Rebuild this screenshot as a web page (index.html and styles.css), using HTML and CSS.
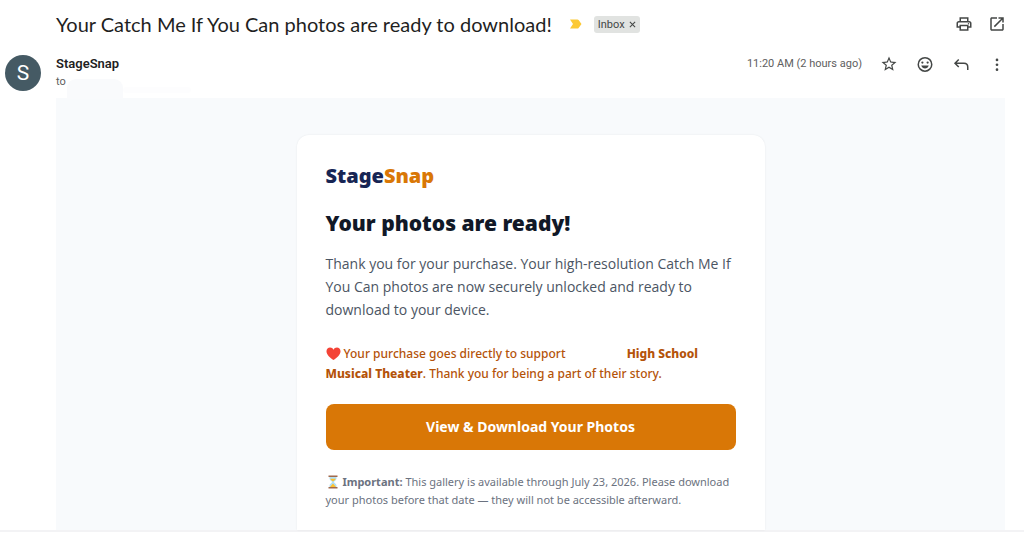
FILE: index.html
```
<!DOCTYPE html>
<html lang="en">
<head>
    <meta charset="UTF-8">
    <meta name="viewport" content="width=device-width, initial-scale=1.0">
    <title>Your Catch Me If You Can photos are ready to download!</title>
    <link rel="stylesheet" href="styles.css">
</head>
<body>
    <div class="mail">
        <header class="subject-row">
            <h1 class="subject">Your Catch Me If You Can photos are ready to download!</h1>
            <svg class="important" viewBox="0 0 12 10" width="12" height="10"><path d="M0 0.5h7.5q.7 0 1.1.6L11.5 5 8.600 8.900q-.4.600-1.100.600H0L3 5z" fill="#fcc934"/></svg>
            <span class="label">Inbox <button type="button" class="label-close" aria-label="Remove label"><svg viewBox="0 0 8 8" width="7" height="7"><path d="M1 1l6 6M7 1L1 7" stroke="#444746" stroke-width="1.2"/></svg></button></span>
            <div class="actions">
                <button type="button" class="icon-btn" aria-label="Print">
                    <svg viewBox="0 0 24 24" width="18" height="18"><path d="M19 8h-1V3H6v5H5c-1.660 0-3 1.340-3 3v6h4v4h12v-4h4v-6c0-1.660-1.340-3-3-3zM8 5h8v3H8V5zm8 14H8v-4h8v4zm2-4v-2H6v2H4v-4c0-.55.45-1 1-1h14c.55 0 1 .45 1 1v4h-2z" fill-rule="evenodd"/><circle cx="18" cy="11.500" r="1"/></svg>
                </button>
                <button type="button" class="icon-btn" aria-label="Open in new window">
                    <svg viewBox="0 0 24 24" width="18" height="18"><path d="M19 19H5V5h7V3H5c-1.110 0-2 .9-2 2v14c0 1.100.89 2 2 2h14c1.100 0 2-.9 2-2v-7h-2v7zM14 3v2h3.590l-9.830 9.830 1.410 1.410L19 6.410V10h2V3h-7z"/></svg>
                </button>
            </div>
        </header>

        <div class="sender-row">
            <div class="avatar">S</div>
            <div class="sender">
                <div class="sender-name">StageSnap</div>
                <div class="recipient">to <span class="recipient-hidden"></span></div>
            </div>
            <span class="date">11:20 AM (2 hours ago)</span>
            <div class="actions">
                <button type="button" class="icon-btn" aria-label="Star">
                    <svg viewBox="0 0 24 24" width="18" height="18"><path d="M22 9.240l-7.190-.62L12 2 9.190 8.630 2 9.240l5.460 4.730L5.820 21 12 17.270 18.180 21l-1.630-7.030L22 9.240zM12 15.400l-3.760 2.270 1-4.280-3.320-2.880 4.380-.38L12 6.100l1.710 4.040 4.380.38-3.320 2.880 1 4.280L12 15.400z"/></svg>
                </button>
                <button type="button" class="icon-btn" aria-label="Add reaction">
                    <svg viewBox="0 0 24 24" width="18" height="18"><circle cx="12" cy="12.500" r="9" fill="none" stroke="#444746" stroke-width="2"/><circle cx="8.500" cy="10" r="1.500"/><circle cx="15.500" cy="10" r="1.500"/><path d="M7 14h10c-.8 2.400-2.700 4-5 4s-4.200-1.600-5-4z"/></svg>
                </button>
                <button type="button" class="icon-btn" aria-label="Reply">
                    <svg viewBox="0 0 24 24" width="18" height="18"><path d="M9 6L4 11l5 5M4 11h12c3 0 5 2 5 5v4" fill="none" stroke="#444746" stroke-width="2"/></svg>
                </button>
                <button type="button" class="icon-btn" aria-label="More">
                    <svg viewBox="0 0 24 24" width="18" height="18"><circle cx="12" cy="6.500" r="1.800"/><circle cx="12" cy="13" r="1.800"/><circle cx="12" cy="19.500" r="1.800"/></svg>
                </button>
            </div>
        </div>

        <main class="message">
            <div class="card">
                <div class="brand">Stage<span class="brand-accent">Snap</span></div>
                <h2 class="title">Your photos are ready!</h2>
                <p class="intro">Thank you for your purchase. Your high-resolution Catch Me If You Can photos are now securely unlocked and ready to download to your device.</p>
                <p class="support"><svg class="emoji" viewBox="0 0 16 16" width="15" height="15"><path d="M8 15C4.500 12.200.5 9.500.5 5.500.5 3 2.300 1.500 4.300 1.500 6 1.500 7.300 2.400 8 4c.7-1.600 2-2.500 3.700-2.500 2 0 3.800 1.500 3.800 4C15.500 9.500 11.500 12.200 8 15z" fill="#f44336"/></svg> Your purchase goes directly to support <span class="school-hidden"></span><strong>High School Musical Theater</strong>. Thank you for being a part of their story.</p>
                <a class="download-btn" href="#">View &amp; Download Your Photos</a>
                <p class="note"><svg class="emoji" viewBox="0 0 14 14" width="14" height="14"><path d="M3.500 1.500h7v2C10.500 5.500 8 6 8 7s2.500 1.500 2.500 3.500v2h-7v-2C3.500 8.500 6 8 6 7S3.500 5.500 3.500 3.500z" fill="#b3e0f5"/><path d="M4.300 3.700h5.400C9.300 5.200 7.500 5.600 7 6.600 6.500 5.600 4.700 5.200 4.300 3.700zM7 8.500l3 3.500H4z" fill="#ffc02d"/><path d="M2.500.5h9v1.500h-9zM2.500 12h9v1.500h-9z" fill="#a1694b"/></svg> <strong>Important:</strong> This gallery is available through July 23, 2026. Please download your photos before that date — they will not be accessible afterward.</p>
            </div>
        </main>
    </div>
</body>
</html>
```
FILE: styles.css
```
* {
    box-sizing: border-box;
}
body {
    margin: 0;
    background: #fff;
    color: #1f1f1f;
    font-family: Roboto, Arial, sans-serif;
}
h1, h2, p {
    margin: 0;
}
.mail {
    border-bottom: 2px solid #f3f3f5;
}
.subject-row {
    display: flex;
    align-items: center;
    height: 48px;
    padding: 0 18px 0 56px;
}
.subject {
    font-family: Lato, sans-serif;
    font-size: 20px;
    font-weight: 400;
    line-height: 28px;
}
.important {
    margin: 0 12px 0 18px;
}
.label {
    display: flex;
    align-items: center;
    gap: 4px;
    height: 17px;
    padding: 0 4px;
    border-radius: 3px;
    background: #e1e3e1;
    color: #444746;
    font-size: 11px;
}
.label-close, .icon-btn {
    display: flex;
    padding: 0;
    border: none;
    background: none;
    cursor: pointer;
}
.actions {
    display: flex;
    gap: 15px;
    margin-left: auto;
}
.icon-btn svg {
    fill: #444746;
}
.sender-row {
    display: flex;
    align-items: flex-start;
    height: 50px;
    padding: 7px 18px 0 5px;
}
.avatar {
    width: 36px;
    height: 36px;
    margin-right: 15px;
    border-radius: 50%;
    background: #455a64;
    color: #fff;
    font-size: 21px;
    line-height: 36px;
    text-align: center;
}
.sender-name {
    font-size: 13px;
    font-weight: 600;
    line-height: 18px;
}
.recipient {
    position: relative;
    color: #5e5e5e;
    font-size: 11px;
    line-height: 18px;
}
.recipient-hidden {
    position: absolute;
    top: 6px;
    left: 11px;
    width: 56px;
    height: 20px;
    border-radius: 9px 9px 0 0;
    background: #f9fafc;
}
.recipient-hidden::after {
    content: "";
    position: absolute;
    top: 8px;
    left: 56px;
    width: 68px;
    height: 6px;
    border-radius: 3px;
    background: #fdfdfe;
}
.date {
    margin-left: auto;
    color: #5e5e5e;
    font-size: 11px;
    line-height: 18px;
}
.sender-row .actions {
    gap: 18px;
    margin-left: 18px;
}
.message {
    margin: 0 19px 0 56px;
    padding: 37px 20px 0;
    background: #f8fafc;
}
.card {
    max-width: 468px;
    margin: 0 auto;
    padding: 28px 29px 21px;
    border-radius: 12px 12px 0 0;
    background: #fff;
    box-shadow: 0 0 2px rgba(15, 23, 42, 0.08);
    font-family: "Noto Sans", sans-serif;
}
.brand {
    color: #172554;
    font-size: 20px;
    font-weight: 900;
    line-height: 26px;
}
.brand-accent {
    color: #d97706;
}
.title {
    margin-top: 19px;
    color: #111827;
    font-size: 21px;
    font-weight: 900;
    line-height: 30px;
}
.intro {
    margin-top: 14px;
    color: #4b5563;
    font-family: "Open Sans", sans-serif;
    font-size: 14px;
    line-height: 23px;
}
.support {
    margin-top: 23px;
    color: #b45309;
    font-size: 12px;
    font-weight: 500;
    line-height: 20px;
}
.support strong {
    font-weight: 800;
}
.emoji {
    vertical-align: -3px;
}
.school-hidden {
    display: inline-block;
    width: 58px;
}
.download-btn {
    display: block;
    margin-top: 20px;
    border-radius: 8px;
    background: #d97706;
    color: #fff;
    font-size: 14px;
    font-weight: 700;
    line-height: 46px;
    text-align: center;
    text-decoration: none;
}
.note {
    margin-top: 23px;
    color: #6b7280;
    font-size: 11px;
    line-height: 18px;
}
```
